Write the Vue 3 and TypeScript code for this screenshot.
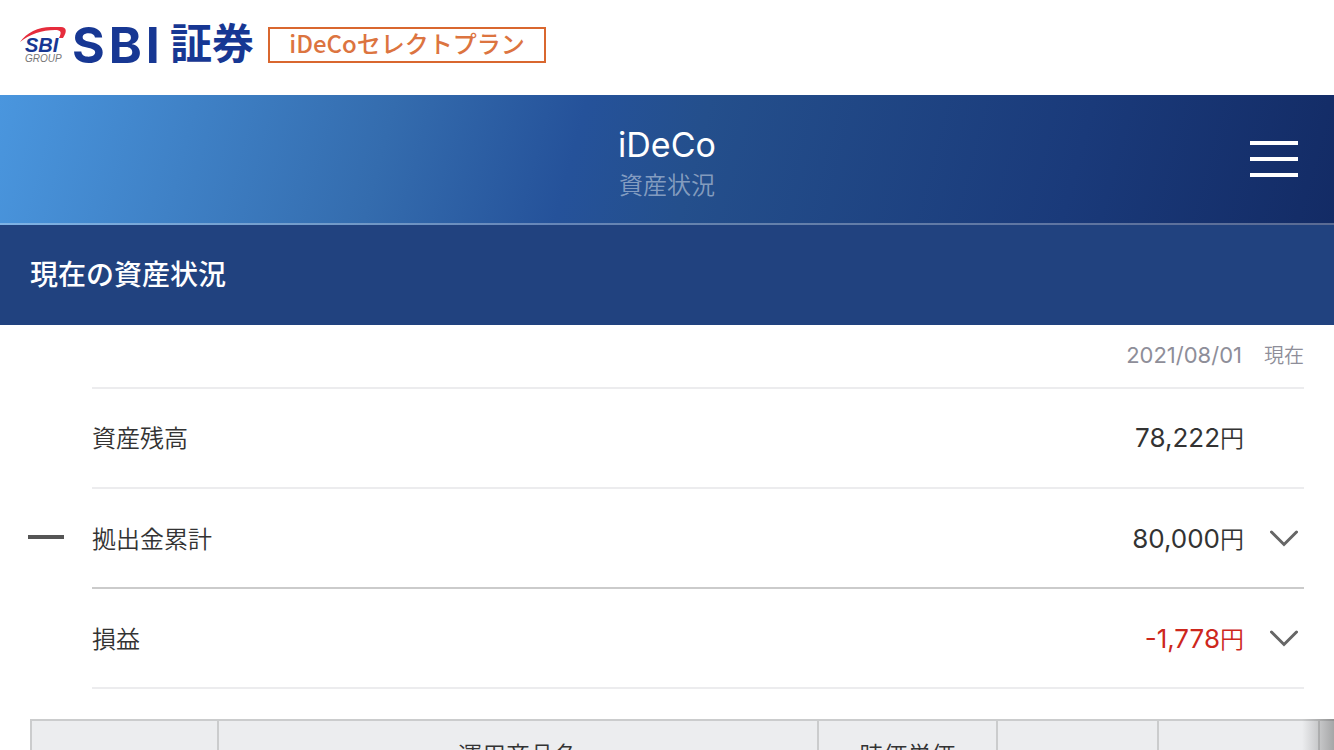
<script setup lang="ts">
interface AssetRow {
  label: string
  amount: string
  unit: string
  operator?: 'minus'
  expandable: boolean
  negative?: boolean
  strong?: boolean
}

const rows: AssetRow[] = [
  { label: '資産残高', amount: '78,222', unit: '円', expandable: false },
  { label: '拠出金累計', amount: '80,000', unit: '円', operator: 'minus', expandable: true, strong: true },
  { label: '損益', amount: '-1,778', unit: '円', expandable: true, negative: true },
]
</script>

<template>
  <div class="page">
    <header class="brand">
      <div class="brand-logo">
        <svg class="mark" viewBox="0 0 48 38" role="img" aria-label="SBI GROUP">
          <path d="M0 16C7 6 20 0 34 1H41C47 1 47 6 43 12L39 12C42 6 41 4 35 4C22 4 10 8 0 16Z" fill="#e62c3c" />
          <text x="5" y="26" class="mark-name">SBI</text>
          <text x="5" y="36" class="mark-group">GROUP</text>
        </svg>
        <span class="brand-latin"><span>S</span><span>B</span><span>I</span></span><span class="brand-kanji">証券</span>
      </div>
      <div class="plan">iDeCoセレクトプラン</div>
    </header>

    <div class="title-bar">
      <div class="title-text">
        <h1>iDeCo</h1>
        <p>資産状況</p>
      </div>
      <button class="menu" type="button" aria-label="メニュー">
        <span></span><span></span><span></span>
      </button>
    </div>

    <main>
      <h2>現在の資産状況</h2>
      <section class="summary">
        <p class="as-of"><time datetime="2021-08-01">2021/08/01</time>　現在</p>
        <ul>
          <li v-for="row in rows" :key="row.label" :class="{ strong: row.strong }">
            <span class="operator" :class="row.operator"></span>
            <span class="label">{{ row.label }}</span>
            <span class="amount" :class="{ negative: row.negative }">{{ row.amount }}<span class="unit">{{ row.unit }}</span></span>
            <button v-if="row.expandable" class="toggle" type="button" :aria-label="row.label">
              <svg viewBox="0 0 28 18" aria-hidden="true">
                <path d="M1.5 2L14 14.5L26.5 2" fill="none" stroke="#666" stroke-width="3" stroke-linecap="round" />
              </svg>
            </button>
          </li>
        </ul>
      </section>

      <div class="table-area">
        <table>
          <colgroup>
            <col class="c-type"><col class="c-name"><col class="c-price"><col class="c-a"><col class="c-b"><col class="c-c">
          </colgroup>
          <thead>
            <tr>
              <th></th><th>運用商品名</th><th>時価単価</th><th></th><th></th><th></th>
            </tr>
          </thead>
        </table>
      </div>
    </main>
  </div>
</template>

<style>
body {
  margin: 0;
  background: #fff;
}
</style>

<style scoped>
.page {
  height: 100vh;
  overflow: hidden;
  color: #333;
  font-family: Inter, "Noto Sans CJK JP", sans-serif;
  font-size: 24px;
  font-weight: 400;
}
h1, h2, p, ul {
  margin: 0;
  padding: 0;
  font-weight: inherit;
}
button {
  padding: 0;
  border: 0;
  background: none;
  cursor: pointer;
}
.brand {
  display: flex;
  align-items: center;
  gap: 14px;
  height: 90px;
  padding: 0 20px 5px;
}
.brand-logo {
  display: flex;
  align-items: center;
  height: 38px;
  color: #173793;
  line-height: 38px;
}
.mark {
  width: 48px;
  height: 38px;
  margin-right: 4px;
}
.mark-name {
  font: italic bold 20px "Liberation Sans", sans-serif;
  fill: #173793;
}
.mark-group {
  font: italic 10px "Liberation Sans", sans-serif;
  fill: #777;
}
.brand-latin {
  display: flex;
  gap: 4px;
  width: 92px;
  font-family: Inter, sans-serif;
  font-size: 50px;
  font-weight: 700;
}
.brand-kanji {
  margin-left: 6px;
  padding-bottom: 2px;
  font-size: 42px;
  font-weight: 700;
}
.plan {
  display: flex;
  align-items: center;
  justify-content: center;
  width: 278px;
  height: 36px;
  padding-bottom: 4px;
  box-sizing: border-box;
  border: 2px solid #d9672f;
  color: #dc7440;
  font-family: "Noto Sans CJK JP", sans-serif;
  font-size: 24px;
  font-weight: 500;
  line-height: 28px;
  white-space: nowrap;
}
.title-bar {
  position: relative;
  display: flex;
  align-items: center;
  justify-content: center;
  height: 128px;
  border-bottom: 2px solid rgba(255, 255, 255, 0.3);
  background: linear-gradient(105deg, #4a96de 0%, #346cae 29%, #25529a 43%, #244f8c 52%, #1a3a7a 80%, #132b65 100%) border-box;
  text-align: center;
}
.title-text {
  padding-top: 10px;
}
.title-text h1 {
  color: #fff;
  font-size: 34px;
  line-height: 44px;
}
.title-text p {
  color: rgba(255, 255, 255, 0.45);
  font-weight: 350;
  line-height: 38px;
}
.menu {
  position: absolute;
  right: 36px;
  display: flex;
  flex-direction: column;
  gap: 12px;
}
.menu span {
  width: 48px;
  height: 4px;
  background: #fff;
}
h2 {
  padding: 0 30px;
  background: #21427f;
  color: #fff;
  font-size: 28px;
  font-weight: 500;
  line-height: 100px;
}
.summary {
  padding: 0 30px 0 28px;
}
.as-of {
  height: 62px;
  color: #8e8e99;
  font-size: 20px;
  font-weight: 350;
  line-height: 60px;
  text-align: right;
}
.as-of time {
  margin-right: 2px;
  font-size: 22px;
  font-weight: 400;
}
ul {
  list-style: none;
}
li {
  display: grid;
  grid-template-columns: 64px 1fr auto 60px;
  align-items: center;
  height: 100px;
  background:
    linear-gradient(#ececee, #ececee) 64px 100% / 100% 2px no-repeat;
}
li:first-child {
  height: 102px;
  background:
    linear-gradient(#ececee, #ececee) 64px 0 / 100% 2px no-repeat,
    linear-gradient(#ececee, #ececee) 64px 100% / 100% 2px no-repeat;
}
li.strong {
  background:
    linear-gradient(#cbcbcb, #cbcbcb) 64px 100% / 100% 2px no-repeat;
}
.operator.minus {
  width: 36px;
  height: 4px;
  margin-bottom: 4px;
  background: #555;
}
.label {
  padding-bottom: 4px;
  font-weight: 350;
}
.amount {
  padding-bottom: 4px;
  font-size: 26px;
}
.unit {
  font-size: 24px;
  font-weight: 350;
}
.negative {
  color: #cd271c;
}
.toggle {
  justify-self: end;
  width: 28px;
  height: 18px;
  margin-right: 6px;
}
.toggle svg {
  display: block;
  width: 28px;
  height: 18px;
}
.table-area {
  position: relative;
  margin: 30px 0 0 30px;
  overflow: hidden;
}
.table-area::after {
  content: "";
  position: absolute;
  inset: 0 0 0 auto;
  width: 32px;
  background: linear-gradient(90deg, rgba(60, 60, 60, 0), rgba(60, 60, 60, 0.4));
}
table {
  width: 115%;
  table-layout: fixed;
  border-collapse: collapse;
}
.c-type { width: 187px; }
.c-name { width: 600px; }
.c-price { width: 179px; }
.c-a { width: 161px; }
.c-b { width: 161px; }
th {
  height: 64px;
  padding: 0;
  border: 2px solid #cbcccd;
  background: #ecedef;
  font-size: 24px;
  font-weight: 350;
}
</style>
